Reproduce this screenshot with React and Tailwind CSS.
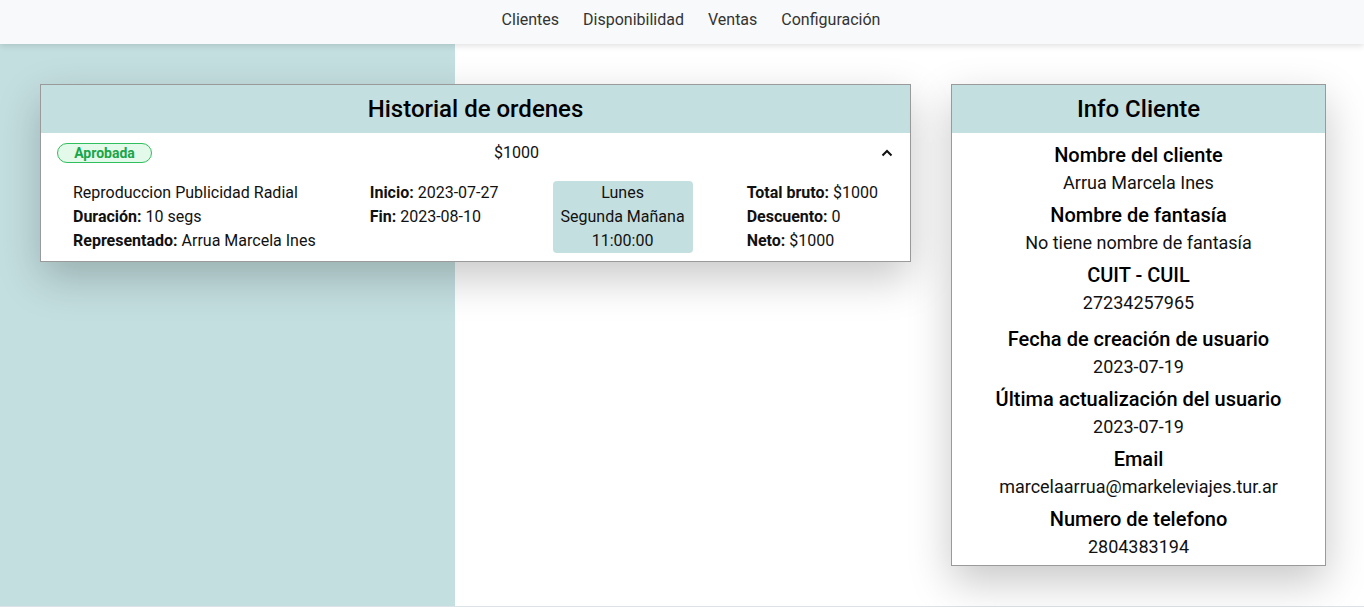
import React from "react";

const teal = "bg-[#c4dfe0]";

function Field({ label, value, extra }) {
  return (
    <div className={extra ? "mt-2" : "mt-1 first:mt-0"}>
      <div className="text-xl leading-7 font-medium text-black">{label}</div>
      <div className="text-lg leading-7 text-[#111]">{value}</div>
    </div>
  );
}

function Chevron() {
  return (
    <svg width="12" height="8" viewBox="0 0 12 8" fill="none" stroke="#111" strokeWidth="2">
      <path d="M1.5 6.5 L6 2 L10.5 6.5" />
    </svg>
  );
}

export default function App() {
  return (
    <div className="min-h-[607px] bg-white text-[#111]" style={{ fontFamily: "Roboto, 'Noto Sans', sans-serif" }}>
      <nav className="relative z-10 h-11 bg-[#f8f9fb] shadow-[0_2px_6px_rgba(0,0,0,0.12)] flex items-center justify-center pl-[18px] pb-1">
        <ul className="flex gap-[24px] text-base text-[#333]">
          <li>Clientes</li>
          <li>Disponibilidad</li>
          <li>Ventas</li>
          <li>Configuración</li>
        </ul>
      </nav>

      <main className="h-[562px] bg-[linear-gradient(to_right,#c4dfe0_455px,#ffffff_455px)] flex items-start pt-10 pl-10">
        <section className="w-[871px] bg-white border border-[#9a9a9a] shadow-[0_16px_40px_rgba(0,0,0,0.22)]">
          <div className={`${teal} h-12 flex items-center justify-center text-2xl font-medium text-black`}>
            Historial de ordenes
          </div>
          <div className="pt-2 pb-2">
            <div className="flex items-center justify-between pl-4 pr-[17px] h-6">
              <span className="h-5 w-[95px] flex items-center justify-center rounded-full border border-[#2fbf5c] bg-[#e3f9e9] text-sm font-bold text-[#1aa548]">
                Aprobada
              </span>
              <span className="text-base">$1000</span>
              <Chevron />
            </div>
            <div className="mt-4 flex justify-between px-8 text-base leading-6">
              <div>
                <div>Reproduccion Publicidad Radial</div>
                <div><b className="font-bold">Duración:</b> 10 segs</div>
                <div><b className="font-bold">Representado:</b> Arrua Marcela Ines</div>
              </div>
              <div>
                <div><b className="font-bold">Inicio:</b> 2023-07-27</div>
                <div><b className="font-bold">Fin:</b> 2023-08-10</div>
              </div>
              <div className={`${teal} w-[140px] rounded text-center`}>
                <div>Lunes</div>
                <div>Segunda Mañana</div>
                <div>11:00:00</div>
              </div>
              <div>
                <div><b className="font-bold">Total bruto:</b> $1000</div>
                <div><b className="font-bold">Descuento:</b> 0</div>
                <div><b className="font-bold">Neto:</b> $1000</div>
              </div>
            </div>
          </div>
        </section>

        <section className="ml-10 w-[375px] bg-white border border-[#9a9a9a] shadow-[0_16px_40px_rgba(0,0,0,0.22)]">
          <div className={`${teal} h-12 flex items-center justify-center text-2xl font-medium text-black`}>
            Info Cliente
          </div>
          <div className="pt-2 pb-1 text-center flex flex-col">
            <Field label="Nombre del cliente" value="Arrua Marcela Ines" />
            <Field label="Nombre de fantasía" value="No tiene nombre de fantasía" />
            <Field label="CUIT - CUIL" value="27234257965" />
            <Field label="Fecha de creación de usuario" value="2023-07-19" extra />
            <Field label="Última actualización del usuario" value="2023-07-19" />
            <Field label="Email" value="marcelaarrua@markeleviajes.tur.ar" />
            <Field label="Numero de telefono" value="2804383194" />
          </div>
        </section>
      </main>
      <div className="h-px bg-[#dbe3e8]" />
    </div>
  );
}
